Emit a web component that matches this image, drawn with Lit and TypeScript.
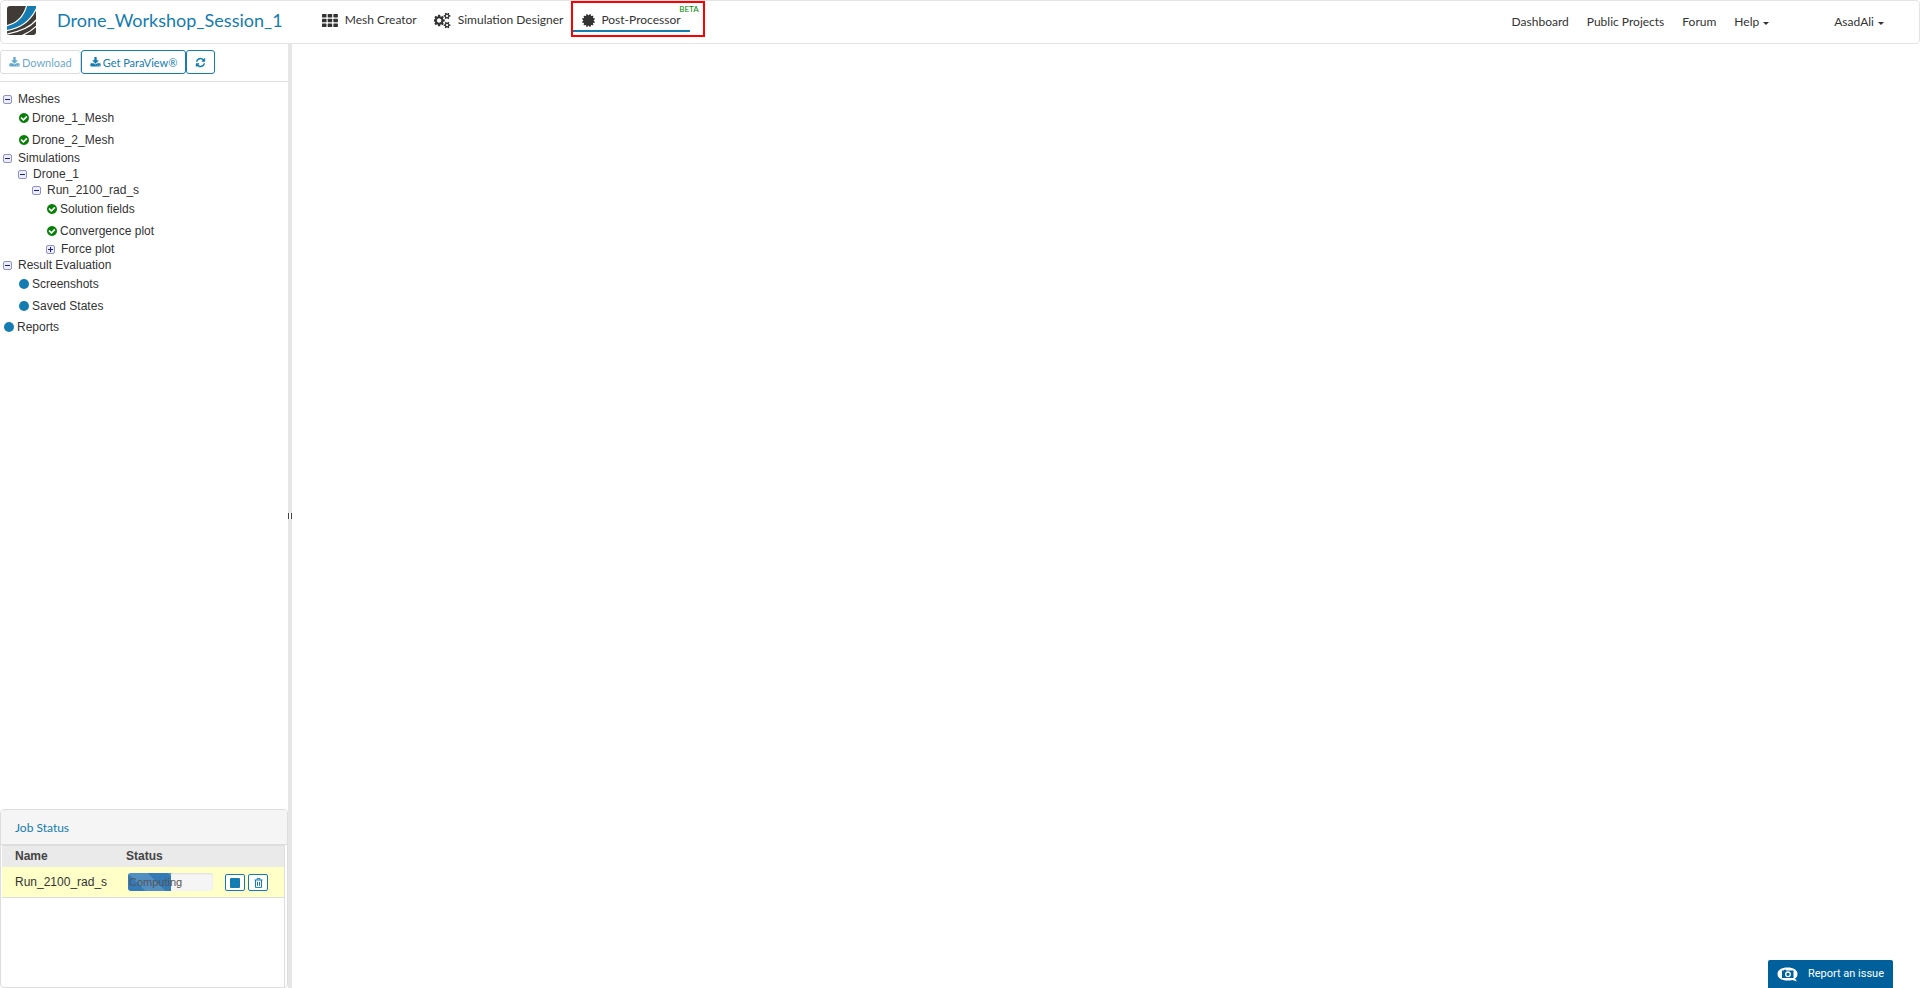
import { LitElement, html, svg, css, nothing } from "lit";
import { customElement, state } from "lit/decorators.js";
import { classMap } from "lit/directives/class-map.js";

const PATHS = {
  download:
    "M1344 1344q0-26-19-45t-45-19-45 19-19 45 19 45 45 19 45-19 19-45zm256 0q0-26-19-45t-45-19-45 19-19 45 19 45 45 19 45-19 19-45zm128-224v320q0 40-28 68t-68 28h-1472q-40 0-68-28t-28-68v-320q0-40 28-68t68-28h465l135 136q58 56 136 56t136-56l136-136h464q40 0 68 28t28 68zm-325-569q17 41-14 70l-448 448q-18 19-45 19t-45-19l-448-448q-31-29-14-70 17-39 59-39h256v-448q0-26 19-45t45-19h256q26 0 45 19t19 45v448h256q42 0 59 39z",
  refresh:
    "M1639 1056q0 5-1 7-64 268-268 434.5t-478 166.5q-146 0-282.5-55t-243.5-157l-129 129q-19 19-45 19t-45-19-19-45v-448q0-26 19-45t45-19h448q26 0 45 19t19 45-19 45l-137 137q71 66 161 102t187 36q134 0 250-65t186-179q11-17 53-117 8-23 30-23h192q13 0 22.5 9.5t9.5 22.5zm25-800v448q0 26-19 45t-45 19h-448q-26 0-45-19t-19-45 19-45l138-138q-148-137-349-137-134 0-250 65t-186 179q-11 17-53 117-8 23-30 23h-199q-13 0-22.5-9.5t-9.5-22.5v-7q65-268 270-434.5t480-166.5q146 0 284 55.5t245 156.5l130-129q19-19 45-19t45 19 19 45z",
  certificate:
    "M1504 896l138 135q30 28 20 70-12 41-52 51l-188 48 53 186q12 41-19 70-29 31-70 19l-186-53-48 188q-10 40-51 52-12 2-19 2-31 0-51-22l-135-138-135 138q-28 30-70 20-41-11-51-52l-48-188-186 53q-41 12-70-19-31-29-19-70l53-186-188-48q-40-10-52-51-10-42 20-70l138-135-138-135q-30-28-20-70 12-41 52-51l188-48-53-186q-12-41 19-70 29-31 70-19l186 53 48-188q10-41 51-51 41-12 70 19l135 139 135-139q29-30 70-19 41 10 51 51l48 188 186-53q41-12 70 19 31 29 19 70l-53 186 188 48q40 10 52 51 10 42-20 70z",
  cogs:
    "M832 896q0-106-75-181t-181-75-181 75-75 181 75 181 181 75 181-75 75-181zm768 512q0-52-38-90t-90-38-90 38-38 90q0 53 37.5 90.5t90.5 37.5 90.5-37.5 37.5-90.5zm0-1024q0-52-38-90t-90-38-90 38-38 90q0 53 37.5 90.5t90.5 37.5 90.5-37.5 37.5-90.5zm-384 421v185q0 10-7 19.5t-16 10.5l-155 24q-11 35-32 76 34 48 90 115 7 11 7 20 0 12-7 19-23 30-82.5 89.5t-78.5 59.5q-11 0-21-7l-115-90q-37 19-77 31-11 108-23 155-7 24-30 24h-186q-11 0-20-7.5t-10-17.5l-23-153q-34-10-75-31l-118 89q-7 7-20 7-11 0-21-8-144-133-144-160 0-9 7-19 10-14 41-53t47-61q-23-44-35-82l-152-24q-10-1-17-9.5t-7-19.5v-185q0-10 7-19.5t16-10.5l155-24q11-35 32-76-34-48-90-115-7-11-7-20 0-12 7-20 22-30 82-89t79-59q11 0 21 7l115 90q34-18 77-32 11-108 23-154 7-24 30-24h186q11 0 20 7.5t10 17.5l23 153q34 10 75 31l118-89q8-7 20-7 11 0 21 8 144 133 144 160 0 8-7 19-12 16-42 54t-45 60q23 48 34 82l152 23q10 2 17 10.5t7 19.5zm640 533v140q0 16-149 31-12 27-30 52 51 113 51 138 0 4-4 7-122 71-124 71-8 0-46-47t-52-68q-20 2-30 2t-30-2q-14 21-52 68t-46 47q-2 0-124-71-4-3-4-7 0-25 51-138-18-25-30-52-149-15-149-31v-140q0-16 149-31 13-29 30-52-51-113-51-138 0-4 4-7 4-2 35-20t59-34 30-16q8 0 46 46.5t52 67.5q20-2 30-2t30 2q51-71 92-112l6-2q4 0 124 70 4 3 4 7 0 25-51 138 17 23 30 52 149 15 149 31zm0-1024v140q0 16-149 31-12 27-30 52 51 113 51 138 0 4-4 7-122 71-124 71-8 0-46-47t-52-68q-20 2-30 2t-30-2q-14 21-52 68t-46 47q-2 0-124-71-4-3-4-7 0-25 51-138-18-25-30-52-149-15-149-31v-140q0-16 149-31 13-29 30-52-51-113-51-138 0-4 4-7 4-2 35-20t59-34 30-16q8 0 46 46.5t52 67.5q20-2 30-2t30 2q51-71 92-112l6-2q4 0 124 70 4 3 4 7 0 25-51 138 17 23 30 52 149 15 149 31z",
  check:
    "M1412 734q0-28-18-46l-91-90q-19-19-45-19t-45 19l-408 407-226-226q-19-19-45-19t-45 19l-91 90q-18 18-18 46 0 27 18 45l362 362q19 19 45 19 27 0 46-19l543-543q18-18 18-45zm252 162q0 209-103 385.5t-279.5 279.5-385.5 103-385.5-103-279.5-279.5-103-385.5 103-385.5 279.5-279.5 385.5-103 385.5 103 279.5 279.5 103 385.5z",
};

const glyph = (name: keyof typeof PATHS, size: number, box = "0 0 1792 1792") => html`
  <svg width=${size} height=${size} viewBox=${box} fill="currentColor" aria-hidden="true">
    <path d=${PATHS[name]}></path>
  </svg>
`;

const gridIcon = html`
  <svg width="16" height="13" viewBox="0 0 16 13" fill="currentColor" aria-hidden="true">
    ${[0, 4.7, 9.4].map((y) =>
      [0, 5.7, 11.4].map(
        (x) => svg`<rect x=${x} y=${y} width="4.500" height="3.500" rx="0.500"></rect>`
      )
    )}
  </svg>
`;

const logo = html`
  <svg width="29" height="29" viewBox="0 0 29 29" aria-hidden="true">
    <defs>
      <clipPath id="tile"><path d="M3 0H29V26a3 3 0 0 1-3 3H0V3a3 3 0 0 1 3-3Z"></path></clipPath>
    </defs>
    <g clip-path="url(#tile)">
      <rect width="29" height="29" fill="#403b37"></rect>
      <path d="M0 19.500C11 17 17 10 20 0H29V3C25 13 15 22 0 24.500Z" fill="#147cb0"></path>
      <g fill="none" stroke="#fff" stroke-width="1.200">
        <path d="M-1 19.800C11 17.200 17 10 19.800 -1"></path>
        <path d="M-1 24.700C14 22.500 24 14 29.500 2.500"></path>
        <path d="M-1 28.200C14 25.500 24 21 30 13"></path>
        <path d="M14 30C20 27.500 25 24.500 30 19.500"></path>
      </g>
    </g>
  </svg>
`;

interface TreeNode {
  label: string;
  kind: "branch" | "done" | "item";
  open?: boolean;
  children?: TreeNode[];
}

const TREE: TreeNode[] = [
  {
    label: "Meshes",
    kind: "branch",
    open: true,
    children: [
      { label: "Drone_1_Mesh", kind: "done" },
      { label: "Drone_2_Mesh", kind: "done" },
    ],
  },
  {
    label: "Simulations",
    kind: "branch",
    open: true,
    children: [
      {
        label: "Drone_1",
        kind: "branch",
        open: true,
        children: [
          {
            label: "Run_2100_rad_s",
            kind: "branch",
            open: true,
            children: [
              { label: "Solution fields", kind: "done" },
              { label: "Convergence plot", kind: "done" },
              { label: "Force plot", kind: "branch", open: false },
            ],
          },
        ],
      },
    ],
  },
  {
    label: "Result Evaluation",
    kind: "branch",
    open: true,
    children: [
      { label: "Screenshots", kind: "item" },
      { label: "Saved States", kind: "item" },
    ],
  },
  { label: "Reports", kind: "item" },
];

@customElement("top-bar")
export class TopBar extends LitElement {
  static styles = css`
    :host {
      display: block;
      font: 12px/20px Lato, sans-serif;
      color: #333;
    }
    a {
      color: inherit;
      text-decoration: none;
    }
    .bar {
      display: flex;
      align-items: flex-start;
      box-sizing: border-box;
      height: 44px;
      border: 1px solid #e4e4e4;
      border-radius: 4px;
      background: #fff;
    }
    .logo {
      display: block;
      height: 29px;
      padding: 5px 0 0 6px;
    }
    .title {
      margin: 0;
      padding: 7px 30px 0 21px;
      font-size: 18px;
      line-height: 24px;
      font-weight: 400;
      color: #147cb0;
      white-space: nowrap;
    }
    .tools {
      display: flex;
      white-space: nowrap;
    }
    .tool {
      display: flex;
      align-items: center;
      height: 20px;
      padding: 9px 8px 0 9px;
      gap: 7px;
    }
    .active {
      position: relative;
      height: 25px;
      align-items: flex-start;
      padding: 7px 22px 0 8px;
      gap: 5px;
      border: 2px solid #f00;
    }
    .active svg {
      margin-top: 3px;
    }
    .active::after {
      content: "";
      position: absolute;
      left: 0;
      right: 13px;
      bottom: 3px;
      height: 2px;
      background: #147cb0;
    }
    .beta {
      position: absolute;
      right: 4px;
      top: 1px;
      font-size: 8px;
      line-height: 10px;
      color: #008a00;
    }
    .links {
      display: flex;
      gap: 18px;
      margin-left: auto;
      padding: 11px 35px 0 0;
      white-space: nowrap;
    }
    .menu {
      display: flex;
      align-items: center;
      gap: 4px;
    }
    .menu::after {
      content: "";
      border: 3px solid transparent;
      border-top-color: currentColor;
      border-bottom: 0;
      margin-top: 3px;
    }
    .user {
      margin-left: 47px;
    }
  `;

  render() {
    return html`
      <header class="bar">
        <a class="logo" href="#" aria-label="Home">${logo}</a>
        <h1 class="title">Drone_Workshop_Session_1</h1>
        <nav class="tools">
          <a class="tool" href="#mesh">${gridIcon}Mesh Creator</a>
          <a class="tool" href="#simulation">${glyph("cogs", 17, "0 0 1920 1792")}Simulation Designer</a>
          <a class="tool active" href="#post" aria-current="page"
            >${glyph("certificate", 15)}Post-Processor<span class="beta">BETA</span></a
          >
        </nav>
        <nav class="links">
          <a href="#dashboard">Dashboard</a>
          <a href="#projects">Public Projects</a>
          <a href="#forum">Forum</a>
          <a class="menu" href="#help">Help</a>
          <a class="menu user" href="#user">AsadAli</a>
        </nav>
      </header>
    `;
  }
}

@customElement("result-tree")
export class ResultTree extends LitElement {
  @state() private nodes = TREE;

  static styles = css`
    :host {
      display: block;
      padding: 9px 0 0 3px;
      font: 12px/16px "Liberation Sans", Arial, sans-serif;
      color: #333;
    }
    ul {
      list-style: none;
      margin: 0;
      padding: 0;
    }
    ul ul {
      padding-left: 15px;
    }
    ul ul ul {
      padding-left: 14px;
    }
    .row {
      display: flex;
      align-items: center;
      height: 16px;
      white-space: nowrap;
    }
    .leaf {
      height: 21px;
      gap: 3px;
      padding-left: 1px;
    }
    .end + .end {
      margin-top: 1px;
    }
    .toggle {
      box-sizing: border-box;
      width: 9px;
      height: 9px;
      margin: 0 6px 0 0;
      padding: 0;
      border: 1px solid #8d92cb;
      border-radius: 2px;
      background:
        linear-gradient(#1a1aa8, #1a1aa8) center / 5px 1px no-repeat,
        #eceefb;
    }
    .closed {
      background:
        linear-gradient(#1a1aa8, #1a1aa8) center / 5px 1px no-repeat,
        linear-gradient(#1a1aa8, #1a1aa8) center / 1px 5px no-repeat,
        #eceefb;
    }
    .done {
      color: #078007;
    }
    .item {
      color: #147cb0;
    }
    .mark {
      display: flex;
    }
  `;

  private toggle(node: TreeNode) {
    node.open = !node.open;
    this.requestUpdate();
  }

  private renderNodes(nodes: TreeNode[]): unknown {
    return html`<ul>
      ${nodes.map((node) =>
        node.kind === "branch"
          ? html`<li>
              <div class="row">
                <button
                  class=${classMap({ toggle: true, closed: !node.open })}
                  aria-label=${node.label}
                  aria-expanded=${node.open ? "true" : "false"}
                  @click=${() => this.toggle(node)}
                ></button>
                <span>${node.label}</span>
              </div>
              ${node.open && node.children ? this.renderNodes(node.children) : nothing}
            </li>`
          : html`<li class="end">
              <div class="row leaf">
                <span class="mark ${node.kind}">
                  ${node.kind === "done"
                    ? glyph("check", 10, "128 128 1536 1536")
                    : html`<svg width="10" height="10" viewBox="0 0 10 10" aria-hidden="true">
                        <circle cx="5" cy="5" r="5" fill="currentColor"></circle>
                      </svg>`}
                </span>
                <span>${node.label}</span>
              </div>
            </li>`
      )}
    </ul>`;
  }

  render() {
    return this.renderNodes(this.nodes);
  }
}

@customElement("job-status")
export class JobStatus extends LitElement {
  @state() private jobs = [{ name: "Run_2100_rad_s", status: "Computing", progress: 50 }];

  static styles = css`
    :host {
      display: block;
      font: 12px/16px "Liberation Sans", Arial, sans-serif;
      color: #333;
    }
    .panel {
      box-sizing: border-box;
      height: 179px;
      display: flex;
      flex-direction: column;
      border: 1px solid #ddd;
      border-radius: 4px;
      background: #fff;
    }
    .title {
      margin: 0;
      padding: 10px 14px 8px;
      border-bottom: 1px solid #ddd;
      border-radius: 3px 3px 0 0;
      background: #f5f5f5;
      font: 12px/16px Lato, sans-serif;
      color: #147cb0;
    }
    .body {
      flex: 1;
      margin: 0 2px 0 1px;
      border-top: 1px solid #ddd;
      border-right: 1px solid #ddd;
    }
    table {
      width: 100%;
      border-collapse: collapse;
      table-layout: fixed;
    }
    th {
      height: 19px;
      padding: 0 0 2px;
      background: #eaeaea;
      text-align: left;
      color: #444;
    }
    td {
      height: 30px;
      padding: 0;
      background: #ffffc8;
      border-bottom: 1px solid #ddd;
    }
    .name {
      width: 111px;
      padding-left: 13px;
    }
    .status {
      width: 87px;
    }
    td.status {
      padding-left: 2px;
    }
    .acts {
      padding-left: 12px;
    }
    .progress {
      position: relative;
      height: 18px;
      border-radius: 3px;
      background: #f5f5f5;
      box-shadow: inset 0 1px 2px rgba(0, 0, 0, 0.1);
      overflow: hidden;
    }
    .fill {
      height: 18px;
      background:
        linear-gradient(
            45deg,
            rgba(255, 255, 255, 0.15) 25%,
            transparent 25%,
            transparent 50%,
            rgba(255, 255, 255, 0.15) 50%,
            rgba(255, 255, 255, 0.15) 75%,
            transparent 75%
          )
          0 0 / 40px 40px,
        #337ab7;
    }
    .label {
      position: absolute;
      left: 1px;
      top: 1px;
      font-size: 11px;
      color: #555;
    }
    .buttons {
      display: flex;
      gap: 3px;
      padding-top: 1px;
    }
    button {
      display: flex;
      align-items: center;
      justify-content: center;
      box-sizing: border-box;
      width: 20px;
      height: 17px;
      padding: 0;
      border: 1px solid #147cb0;
      border-radius: 2px;
      background: #fff;
      color: #147cb0;
    }
  `;

  render() {
    return html`
      <section class="panel">
        <h2 class="title">Job Status</h2>
        <div class="body">
          <table>
            <thead>
              <tr>
                <th class="name">Name</th>
                <th class="status">Status</th>
                <th class="acts"></th>
              </tr>
            </thead>
            <tbody>
              ${this.jobs.map(
                (job) => html`<tr>
                  <td class="name">${job.name}</td>
                  <td class="status">
                    <div class="progress">
                      <div class="fill" style="width:${job.progress}%"></div>
                      <span class="label">${job.status}</span>
                    </div>
                  </td>
                  <td class="acts">
                    <div class="buttons">
                      <button aria-label="Stop">
                        <svg width="10" height="10" viewBox="0 0 10 10" aria-hidden="true">
                          <rect width="10" height="10" rx="1" fill="currentColor"></rect>
                        </svg>
                      </button>
                      <button aria-label="Delete">
                        <svg width="9" height="10" viewBox="0 0 9 10" fill="none" stroke="currentColor" aria-hidden="true">
                          <path d="M0.500 2h8M3 1.800V0.600h3v1.200M1.500 2v7.400h6V2M3.500 3.800v4M5.500 3.800v4"></path>
                        </svg>
                      </button>
                    </div>
                  </td>
                </tr>`
              )}
            </tbody>
          </table>
        </div>
      </section>
    `;
  }
}

@customElement("app-root")
export class AppRoot extends LitElement {
  static styles = css`
    :host {
      display: flex;
      flex-direction: column;
      height: 100vh;
      overflow: hidden;
      background: #fff;
      font: 12px/20px Lato, sans-serif;
    }
    .work {
      flex: 1;
      min-height: 0;
      display: flex;
    }
    .side {
      width: 288px;
      display: flex;
      flex-direction: column;
    }
    .toolbar {
      display: flex;
      padding: 6px 0 7px;
      border-bottom: 1px solid #ddd;
    }
    .btn {
      display: flex;
      align-items: center;
      justify-content: center;
      gap: 2px;
      box-sizing: border-box;
      height: 24px;
      padding: 1px 8px 0;
      border: 1px solid #147cb0;
      border-radius: 3px;
      background: #fff;
      color: #147cb0;
      font: 11px/18px Lato, sans-serif;
      white-space: nowrap;
    }
    .btn:disabled {
      border-color: #ccc;
      opacity: 0.65;
    }
    .tree {
      flex: 1;
      min-height: 0;
      overflow: hidden;
    }
    .splitter {
      width: 4px;
      background: #e6e6e6;
      display: flex;
      align-items: center;
    }
    .grip {
      box-sizing: border-box;
      width: 4px;
      height: 6px;
      border: solid #444;
      border-width: 0 1px;
      background: #fff;
    }
    .view {
      flex: 1;
    }
    .report {
      position: fixed;
      right: 27px;
      bottom: 0;
      display: flex;
      align-items: center;
      gap: 10px;
      height: 28px;
      padding: 0 9px;
      border: 0;
      border-radius: 2px 2px 0 0;
      background: #00609c;
      color: #fff;
      font: 400 11px/16px Roboto, sans-serif;
    }
  `;

  render() {
    return html`
      <top-bar></top-bar>
      <div class="work">
        <aside class="side">
          <div class="toolbar">
            <button class="btn" disabled>${glyph("download", 11)}Download</button>
            <button class="btn">${glyph("download", 11)}Get ParaView®</button>
            <button class="btn" aria-label="Refresh">${glyph("refresh", 11)}</button>
          </div>
          <result-tree class="tree"></result-tree>
          <job-status></job-status>
        </aside>
        <div class="splitter" role="separator" aria-orientation="vertical">
          <span class="grip"></span>
        </div>
        <main class="view"></main>
      </div>
      <button class="report">
        <svg width="21" height="15" viewBox="0 0 21 15" aria-hidden="true">
          <path d="M10.500 0.500C16.500 0.500 20.500 3 20.500 7c0 2-1 3.600-2.500 4.600l2 2.900-4.500-1.500c-1.500.4-3.200.5-5 .5C4.500 13.500.5 11 .5 7S4.500.5 10.500.5Z" fill="#fff"></path>
          <path d="M5 3.500h2v-.8h2v.8h7.500v7.500H5Z" fill="#00609c"></path>
          <circle cx="11" cy="7.300" r="2.300" fill="none" stroke="#fff" stroke-width="1.300"></circle>
        </svg>
        Report an issue
      </button>
    `;
  }
}
